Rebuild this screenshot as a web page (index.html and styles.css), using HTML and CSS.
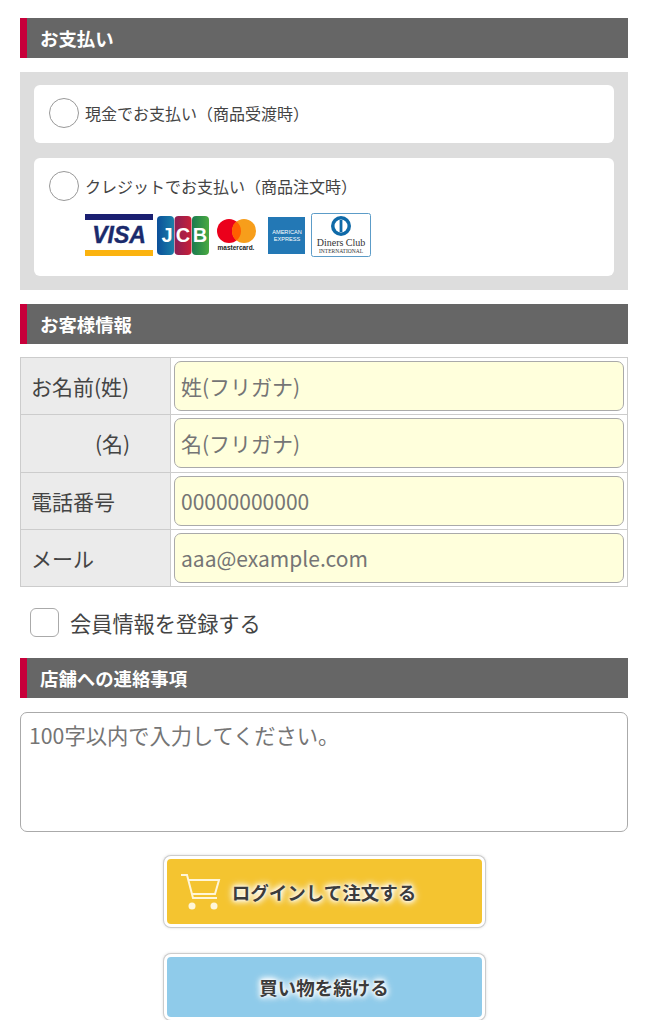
FILE: index.html
```html
<!DOCTYPE html>
<html lang="ja">
<head>
    <meta charset="UTF-8">
    <meta name="viewport" content="width=device-width, initial-scale=1.0">
    <title>ご注文</title>
    <link rel="stylesheet" href="styles.css">
</head>
<body>
    <form class="order-form">
        <h2 class="section-title">お支払い</h2>
        <div class="pay-box">
            <label class="pay-card">
                <span class="pay-line"><input type="radio" name="pay"><span>現金でお支払い（商品受渡時）</span></span>
            </label>
            <label class="pay-card">
                <span class="pay-line"><input type="radio" name="pay"><span>クレジットでお支払い（商品注文時）</span></span>
                <span class="card-logos">
                    <svg class="logo-visa" width="68" height="42" viewBox="0 0 68 42">
                        <rect x="0" y="0" width="68" height="6" fill="#1a1f71"/>
                        <rect x="0" y="36" width="68" height="6" fill="#fbb30f"/>
                        <text x="34" y="29" class="visa-text" text-anchor="middle">VISA</text>
                    </svg>
                    <svg class="logo-jcb" width="52" height="39" viewBox="0 0 52 39">
                        <defs>
                            <linearGradient id="jcb-blue"><stop offset="0" stop-color="#0b4f9a"/><stop offset="1" stop-color="#1a80a8"/></linearGradient>
                            <linearGradient id="jcb-red"><stop offset="0" stop-color="#8a1f55"/><stop offset="1" stop-color="#c82038"/></linearGradient>
                            <linearGradient id="jcb-green"><stop offset="0" stop-color="#1a7a50"/><stop offset="1" stop-color="#4aaa40"/></linearGradient>
                        </defs>
                        <rect x="0" y="0" width="17" height="39" rx="4" fill="url(#jcb-blue)"/>
                        <rect x="17.5" y="0" width="17" height="39" rx="4" fill="url(#jcb-red)"/>
                        <rect x="35" y="0" width="17" height="39" rx="4" fill="url(#jcb-green)"/>
                        <text x="10" y="26" class="jcb-text" text-anchor="middle">J</text>
                        <text x="26" y="26" class="jcb-text" text-anchor="middle">C</text>
                        <text x="43" y="26" class="jcb-text" text-anchor="middle">B</text>
                    </svg>
                    <svg class="logo-mc" width="39" height="33" viewBox="0 0 39 33">
                        <circle cx="12" cy="12" r="12" fill="#eb001b"/>
                        <circle cx="27" cy="12" r="12" fill="#f79e1b"/>
                        <path d="M19.5 2.6a12 12 0 0 1 0 18.8a12 12 0 0 1 0-18.8z" fill="#ff5f00"/>
                        <text x="19" y="31" class="mc-text" text-anchor="middle">mastercard.</text>
                    </svg>
                    <svg class="logo-amex" width="38" height="37" viewBox="0 0 38 37">
                        <rect x="0" y="0" width="37" height="37" fill="#2378b5"/>
                        <text x="19" y="17" class="amex-text" text-anchor="middle">AMERICAN</text>
                        <text x="19" y="24" class="amex-text" text-anchor="middle">EXPRESS</text>
                    </svg>
                    <svg class="logo-diners" width="60" height="44" viewBox="0 0 60 44">
                        <rect x="0.5" y="0.5" width="59" height="43" rx="2" fill="#fff" stroke="#5c9cc8"/>
                        <circle cx="30" cy="13" r="10" fill="#0f6aa8"/>
                        <circle cx="30" cy="13" r="6.5" fill="#fff"/>
                        <rect x="28.6" y="7" width="2.8" height="12" fill="#0f6aa8"/>
                        <text x="30" y="33" class="diners-text" text-anchor="middle">Diners Club</text>
                        <text x="30" y="40" class="diners-small" text-anchor="middle">INTERNATIONAL</text>
                    </svg>
                </span>
            </label>
        </div>

        <h2 class="section-title">お客様情報</h2>
        <table class="info-table">
            <tr>
                <th>お名前(姓)</th>
                <td><input type="text" placeholder="姓(フリガナ)"></td>
            </tr>
            <tr>
                <th class="name-sub">(名)</th>
                <td><input type="text" placeholder="名(フリガナ)"></td>
            </tr>
            <tr>
                <th>電話番号</th>
                <td><input type="tel" placeholder="00000000000"></td>
            </tr>
            <tr>
                <th>メール</th>
                <td><input type="email" placeholder="aaa@example.com"></td>
            </tr>
        </table>

        <label class="register-line"><input type="checkbox"><span>会員情報を登録する</span></label>

        <h2 class="section-title">店舗への連絡事項</h2>
        <textarea class="message" placeholder="100字以内で入力してください。"></textarea>

        <div class="buttons">
            <button type="submit" class="btn btn-order">
                <svg class="cart-icon" width="40" height="38" viewBox="0 0 40 38" fill="none" stroke="#fff6d8" stroke-width="2">
                    <path d="M0 2h6l6 23h24"/>
                    <path d="M7 7h31l-4 14H11"/>
                    <circle cx="11" cy="33" r="3.5" fill="#fff6d8" stroke="none"/>
                    <circle cx="33" cy="33" r="3.5" fill="#fff6d8" stroke="none"/>
                </svg>
                ログインして注文する
            </button>
            <button type="button" class="btn btn-back">買い物を続ける</button>
        </div>
    </form>
</body>
</html>
```

FILE: styles.css
```css
* {
    box-sizing: border-box;
}
body {
    margin: 0;
    padding: 18px 17px 0 20px;
    background: #fff;
    color: #444;
    font-family: "Noto Sans CJK JP", "Noto Sans", sans-serif;
    overflow: hidden;
}
.section-title {
    height: 40px;
    margin: 0;
    padding-left: 13px;
    border-left: 7px solid #c8003a;
    background: #666;
    color: #fff;
    font-size: 18.4px;
    font-weight: 700;
    line-height: 41px;
}
.pay-box {
    display: flex;
    flex-direction: column;
    gap: 15px;
    margin: 14px 0;
    padding: 13px 14px 14px;
    background: #ddd;
}
.pay-card {
    display: block;
    min-height: 58px;
    padding: 13px 15px 0;
    border-radius: 6px;
    background: #fff;
    font-size: 16px;
}
.pay-line {
    display: flex;
    align-items: center;
    gap: 6px;
}
.pay-line input {
    appearance: none;
    flex: none;
    width: 30px;
    height: 30px;
    margin: 0;
    border: 1px solid #999;
    border-radius: 50%;
    background: #fff;
}
.card-logos {
    display: flex;
    align-items: center;
    height: 44px;
    margin: 12px 0 19px 36px;
}
.card-logos svg {
    flex: none;
}
.logo-jcb {
    margin-left: 4px;
}
.logo-mc {
    margin-left: 8px;
}
.logo-amex {
    margin-left: 12px;
}
.logo-diners {
    margin-left: 5px;
}
.visa-text {
    fill: #1a2a6c;
    stroke: #1a2a6c;
    stroke-width: 0.4;
    font: italic 700 23px "Liberation Sans", sans-serif;
}
.jcb-text {
    fill: #fff;
    font: 700 20px "Liberation Sans", sans-serif;
}
.mc-text {
    fill: #222;
    font: 700 6.5px "Liberation Sans", sans-serif;
}
.amex-text {
    fill: #fff;
    font: 5.6px "Liberation Sans", sans-serif;
}
.diners-text {
    fill: #333;
    font: 10px "Liberation Serif", serif;
}
.diners-small {
    fill: #333;
    font: 5.5px "Liberation Serif", serif;
}
.info-table {
    width: 608px;
    margin-top: 13px;
    border-collapse: collapse;
    table-layout: fixed;
}
.info-table th,
.info-table td {
    height: 57.25px;
    padding: 0;
    border: 1px solid #ccc;
}
.info-table th {
    width: 150px;
    padding-left: 10px;
    background: #ebebeb;
    color: #444;
    font-size: 21px;
    font-weight: 400;
    text-align: left;
}
.info-table th.name-sub {
    padding-left: 74px;
}
.info-table td {
    padding: 3px;
}
.info-table input {
    display: block;
    width: 100%;
    height: 50px;
    padding: 0 6px;
    border: 1px solid #aaa;
    border-radius: 7px;
    background: #ffffdc;
    color: #444;
    font: inherit;
    font-size: 21px;
}
.register-line {
    display: flex;
    align-items: center;
    gap: 11px;
    height: 30px;
    margin: 20px 0 21px 10px;
    font-size: 21.2px;
}
.register-line input {
    appearance: none;
    width: 29px;
    height: 29px;
    margin: 0;
    border: 1px solid #aaa;
    border-radius: 6px;
    background: #fff;
}
.message {
    display: block;
    width: 608px;
    height: 120px;
    margin-top: 14px;
    padding: 6px 8px;
    border: 1px solid #aaa;
    border-radius: 7px;
    font: inherit;
    font-size: 21.25px;
    resize: none;
}
.buttons {
    display: flex;
    flex-direction: column;
    align-items: center;
    gap: 27px;
    margin-top: 24px;
}
.btn {
    position: relative;
    width: 321px;
    border: 3px solid #fff;
    border-radius: 7px;
    box-shadow: 0 0 0 1px #ccc, 0 0 3px 1px #ddd;
    color: #3c3c3c;
    font: inherit;
    font-size: 18.5px;
    font-weight: 700;
    text-shadow: 0 0 10px #fff, 0 0 6px #fff, 0 0 6px #fff, 0 0 3px #fff;
}
.btn-order {
    height: 71px;
    padding: 0;
    background: #f4c430;
}
.btn-back {
    height: 66px;
    padding: 0;
    background: #8fcbea;
}
.cart-icon {
    position: absolute;
    left: 14px;
    top: 14px;
}
```
